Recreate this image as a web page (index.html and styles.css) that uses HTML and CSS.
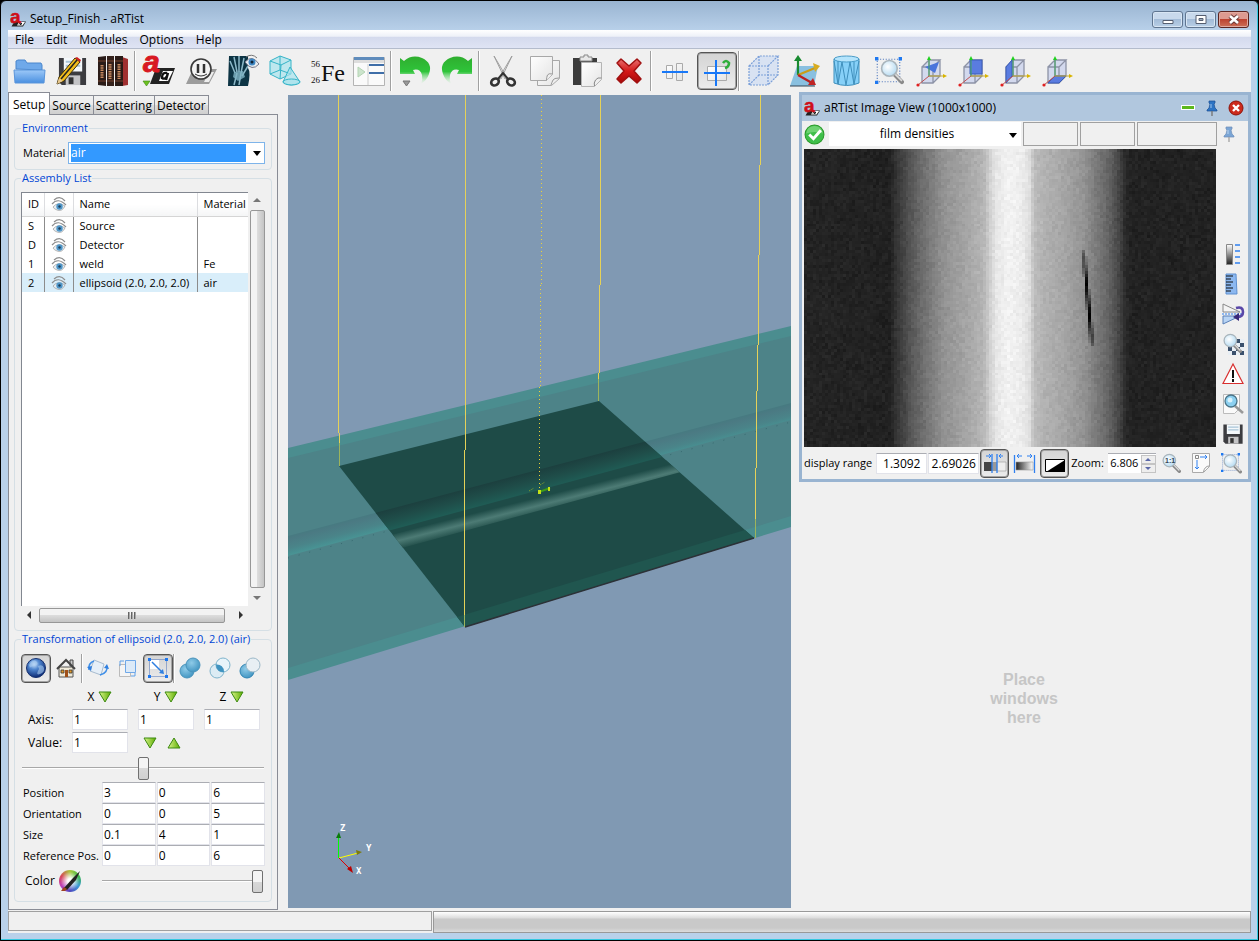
FILE: index.html
```
<!DOCTYPE html>
<html lang="en">
<head>
    <meta charset="UTF-8">
    <meta name="viewport" content="width=device-width, initial-scale=1.0">
    <title>Setup_Finish - aRTist</title>
    <link rel="stylesheet" href="styles.css">
</head>
<body>
<!-- shared icons -->
<svg class="defs" width="0" height="0" aria-hidden="true">
    <defs>
        <linearGradient id="gGreen" x1="0" y1="0" x2="1" y2="1"><stop offset="0" stop-color="#3fd03f"/><stop offset="1" stop-color="#108a10"/></linearGradient>
        <linearGradient id="gUndo" x1="0" y1="0" x2="0" y2="1"><stop offset="0" stop-color="#2fae2f"/><stop offset=".55" stop-color="#2fc43a"/><stop offset="1" stop-color="#a8eab0" stop-opacity="0"/></linearGradient>
        <linearGradient id="gTri" x1="0" y1="0" x2="1" y2="0"><stop offset="0" stop-color="#d9f58c"/><stop offset="1" stop-color="#5cab00"/></linearGradient>
        <linearGradient id="gFolder" x1="0" y1="0" x2="0" y2="1"><stop offset="0" stop-color="#9cc8f8"/><stop offset="1" stop-color="#4a90e0"/></linearGradient>
        <linearGradient id="gPaper" x1="0" y1="0" x2="1" y2="1"><stop offset="0" stop-color="#fff"/><stop offset="1" stop-color="#e4e4e4"/></linearGradient>
        <linearGradient id="gRed" x1="0" y1="0" x2="0" y2="1"><stop offset="0" stop-color="#e87070"/><stop offset=".5" stop-color="#d41a1a"/><stop offset="1" stop-color="#a80808"/></linearGradient>
        <linearGradient id="gGray" x1="0" y1="0" x2="1" y2="0"><stop offset="0" stop-color="#222"/><stop offset="1" stop-color="#fff"/></linearGradient>
        <linearGradient id="gGrayV" x1="0" y1="0" x2="0" y2="1"><stop offset="0" stop-color="#fff"/><stop offset="1" stop-color="#222"/></linearGradient>
        <radialGradient id="gLens" cx=".4" cy=".4" r=".6"><stop offset="0" stop-color="#fff"/><stop offset="1" stop-color="#b8dcf2"/></radialGradient>
        <radialGradient id="gGlobe" cx=".4" cy=".3" r=".7"><stop offset="0" stop-color="#cfe6fb"/><stop offset=".4" stop-color="#4f86cf"/><stop offset="1" stop-color="#0c2a74"/></radialGradient>
        <radialGradient id="gBall" cx=".4" cy=".35" r=".7"><stop offset="0" stop-color="#8fcbe8"/><stop offset="1" stop-color="#3f93c0"/></radialGradient>

        <symbol id="logo" viewBox="0 0 32 32">
            <path d="M3 31l6-10h23l-6 10z" fill="#222"/>
            <path d="M14 29l4-7h12l-5 7z" fill="#fff"/>
            <path d="M18 27q1-4 5-3l-2 4M23 24l-2 4" fill="none" stroke="#111" stroke-width="2"/>
            <text x="0" y="23" font-family="Liberation Sans" font-weight="bold" font-size="38" fill="#cf0f18" stroke="#cf0f18" stroke-width="1">a</text>
        </symbol>
        <symbol id="eye" viewBox="0 0 16 16">
            <path d="M3 4q6-5 11 1M1 8q6-7 14 1" fill="none" stroke="#8d8d8d" stroke-width="1.200"/>
            <path d="M2 11q5-6 12-1q-3 6-8 4q-3-1-4-3z" fill="#e8eef2" stroke="#999" stroke-width=".7"/>
            <circle cx="8.500" cy="10.500" r="3.200" fill="#4f96c8"/>
            <circle cx="8.500" cy="10.500" r="1.200" fill="#1c3c58"/>
        </symbol>
        <symbol id="down" viewBox="0 0 14 12">
            <path d="M1 1h12L7 11z" fill="url(#gTri)" stroke="#3c8a10"/>
        </symbol>
        <symbol id="up" viewBox="0 0 14 12">
            <path d="M1 11h12L7 1z" fill="url(#gTri)" stroke="#3c8a10"/>
        </symbol>
        <symbol id="cube" viewBox="0 0 32 32">
            <path d="M7 12l7-7h11v16l-7 7H7z" fill="#d3d9ee"/>
            <path d="M7 12h11v16H7zM7 12l7-7h11l-7 7M25 5v16l-7 7M14 5v16h11" fill="none" stroke="#8d93a6" stroke-width="1.3"/>
        </symbol>
        <symbol id="axes" viewBox="0 0 32 32">
            <path d="M14 21V4" stroke="#3fa45c"/><path d="M12 5l2-4 2 4z" fill="#1fd01f"/>
            <path d="M14 21h14" stroke="#c4a830"/><path d="M28 19l4 2-4 2z" fill="#d8b400"/>
            <path d="M14 21l-11 9" stroke="#c05050"/><circle cx="3" cy="30" r="1.600" fill="#e02020"/>
        </symbol>
        <symbol id="lens" viewBox="0 0 24 24">
            <path d="M14 14l8 8" stroke="#8a8a8a" stroke-width="4" stroke-linecap="round"/>
            <path d="M15 14l7 7" stroke="#ddd" stroke-width="1.500"/>
            <circle cx="10" cy="9" r="7.500" fill="url(#gLens)" stroke="#a9b4bb" stroke-width="1.500"/>
        </symbol>
        <symbol id="marks" viewBox="0 0 24 24">
            <path d="M2 2h20v20H2z" fill="none" stroke="#5a7fc0" stroke-dasharray="1 1.500"/>
            <path d="M0 0h3v3H0zM21 0h3v3h-3zM0 21h3v3H0z" fill="#1e78f0"/>
        </symbol>
        <symbol id="disk" viewBox="0 0 32 32">
            <path d="M2 2h28v28H5l-3-3z" fill="#3c3c40"/>
            <path d="M7 2h19v14H7z" fill="#f4f8fb"/>
            <path d="M9 6h15M9 10h15" stroke="#a8c4d8" stroke-width="2"/>
            <path d="M9 20h15v10H9z" fill="#c4c4c6"/><path d="M12 22h5v7h-5z" fill="#333"/>
        </symbol>
        <symbol id="pin" viewBox="0 0 16 16">
            <path d="M5 1h6v2l-1 1 1 4 2 2v1H3v-1l2-2 1-4-1-1z" fill="#2d74c4" stroke="#1a4f94" stroke-width=".7"/>
            <path d="M8 11v5" stroke="#777" stroke-width="1.400"/><path d="M7 4v4" stroke="#9cc4ee"/>
        </symbol>
    </defs>
</svg>

<div class="window">
    <header class="titlebar">
        <svg class="app-icon"><use href="#logo"/></svg>
        <h1>Setup_Finish - aRTist</h1>
        <div class="win-buttons">
            <button class="win-btn" aria-label="Minimize"><svg viewBox="0 0 28 15"><path d="M9.500 8.500h10v3h-10z" fill="#fff" stroke="#555e70"/></svg></button>
            <button class="win-btn" aria-label="Maximize"><svg viewBox="0 0 28 15"><path d="M9.500 3.500h10v8h-10z" fill="#fff" stroke="#555e70"/><path d="M12.500 6.500h4v2h-4z" fill="#9ab" stroke="#555e70"/></svg></button>
            <button class="win-btn close" aria-label="Close"><svg viewBox="0 0 28 15"><path d="M10.500 4l8 7M18.500 4l-8 7" stroke="#6b3a38" stroke-width="4.500"/><path d="M10.500 4l8 7M18.500 4l-8 7" stroke="#fff" stroke-width="2.600"/></svg></button>
        </div>
    </header>

    <nav class="menubar">
        <button>File</button><button>Edit</button><button>Modules</button><button>Options</button><button>Help</button>
    </nav>

    <div class="toolbar">
        <button aria-label="Open"><svg viewBox="0 0 32 32"><path d="M3 14V6l2-1h7l2 3h14l1 2v5z" fill="#6fa9ea" stroke="#4a86cc"/><path d="M1 15h31l-1 13H2z" fill="url(#gFolder)" stroke="#5b95da"/></svg></button>
        <button aria-label="Save"><svg viewBox="0 0 32 32"><use href="#disk" x="2" y="1" width="31" height="31"/><path d="M2 29l2-7L20 3l5 4L9 26z" fill="#f2bd1c" stroke="#3a2c08"/><path d="M6 24L22 5" stroke="#222" stroke-width="1.500"/><path d="M20 3l2-1 4 3-1 2z" fill="#d02020"/><path d="M2 29l2-6 4 3z" fill="#e8c890"/></svg></button>
        <button aria-label="Library"><svg viewBox="0 0 32 32"><path d="M25 2l6 2v26l-6 1z" fill="#a03030"/><path d="M1 2l8-1v30l-8-1z" fill="#2b1c18"/><path d="M10 1h7v30h-7z" fill="#35221c"/><path d="M18 1h8v30h-8z" fill="#291a16"/><path d="M1 6h8M1 26h8M10 6h7M10 26h7M18 6h8M18 26h8" stroke="#74402c"/><path d="M5 10v13M13 9v15M22 9v15" stroke="#c88a60" stroke-width="3" stroke-dasharray="1.500 .8"/></svg></button>
        <span class="sep"></span>
        <button aria-label="Run"><svg viewBox="0 0 32 32"><path d="M7 29l6-16h19l-6 16z" fill="#222"/><path d="M16 26l4-10h10l-5 10z" fill="#fff"/><path d="M24 18q-5-1-5 5 3 2 5-2l1-3-2 7" fill="none" stroke="#111" stroke-width="2.400"/><text x="0" y="17" font-family="Liberation Sans" font-style="italic" font-weight="bold" font-size="30" fill="#d81822" stroke="#d81822">a</text><path d="M0 26h7l-3.500 5z" fill="#6cc020" stroke="#3c8a10" stroke-width=".6"/></svg></button>
        <button aria-label="Pause"><svg viewBox="0 0 32 32"><path d="M1 29l7-15h24l-8 15z" fill="#9c9c9c"/><path d="M19 27l5-10h5l-5 10z" fill="#eee"/><circle cx="16" cy="14" r="10" fill="#f4f4f4" stroke="#3a3a3a" stroke-width="1.600"/><path d="M13 9v9M19 9v9" stroke="#333" stroke-width="2.500"/><path d="M10 19q6 4 12 0" fill="none" stroke="#333"/></svg></button>
        <button aria-label="Radiograph"><svg viewBox="0 0 32 32"><path d="M2 1h19v12q3 4 0 18H1z" fill="#0d3444"/><path d="M3 6l5 12M7 2l3 15M12 1v16M17 3l-3 15M21 11l-6 10M10 18l-3 12M14 18l-2 12" stroke="#8cb8c8" stroke-width="1.500"/><path d="M7 17l9-1 2 6-7 4-5-4z" fill="#7fb4c4" opacity=".8"/><path d="M18 7q7-8 14 2q-7 8-14-2z" fill="#e8eef2" stroke="#778"/><circle cx="25" cy="7" r="3.500" fill="#3f88c4"/><circle cx="25" cy="7" r="1.500" fill="#123"/><path d="M19 2q6-4 11 1" fill="none" stroke="#777"/></svg></button>
        <button aria-label="Geometry"><svg viewBox="0 0 32 32"><g fill="#a8e2ec" fill-opacity=".7" stroke="#35b4c8"><path d="M1 6l10-5 11 4v14l-11 5L1 19z"/><path d="M1 6l11 4 10-5M12 10l-1 14M11 1v14L1 19M11 15l11 4" fill="none"/><path d="M21 12L14 27q8 6 17 0z"/><ellipse cx="22.500" cy="27" rx="8.500" ry="3"/></g></svg></button>
        <button aria-label="Materials"><svg viewBox="0 0 32 32"><g font-family="Liberation Serif" fill="#111"><text x="0" y="12" font-size="9">56</text><text x="0" y="28" font-size="9">26</text><text x="10" y="26" font-size="24">Fe</text></g></svg></button>
        <button aria-label="Modules"><svg viewBox="0 0 32 32"><path d="M.5 2.500h31v28H.5z" fill="#fafafa" stroke="#b4b4b4"/><path d="M1 2h30v3H1z" fill="#5f8cbc"/><path d="M1 5h30v3H1z" fill="#ddd"/><path d="M15 9v21" stroke="#ccc"/><path d="M16 9h15v2H16zM16 17h15v2H16z" fill="#3f6ea8"/><path d="M5 12l7 5-7 5z" fill="#cce4cc" stroke="#b4d4b4"/></svg></button>
        <span class="sep"></span>
        <button aria-label="Undo"><svg viewBox="0 0 32 32"><path d="M1 3l4 3q8-7 18-3 11 5 7 16-2 6-8 10 2-4 1-9-2-7-9-5l2 4H1z" fill="url(#gUndo)"/><path d="M4 26h7l-3.500 5z" fill="#999" stroke="#777"/></svg></button>
        <button aria-label="Redo"><svg viewBox="0 0 32 32"><path d="M31 3l-4 3q-8-7-18-3-11 5-7 16 2 6 8 10-2-4-1-9 2-7 9-5l-2 4h15z" fill="url(#gUndo)"/></svg></button>
        <span class="sep"></span>
        <button aria-label="Cut"><svg viewBox="0 0 32 32"><path d="M7 1l13 22-2 1zM25 1L12 23l2 1z" fill="#eee" stroke="#999" stroke-width=".9"/><g fill="none" stroke="#333" stroke-width="2.600"><ellipse cx="8" cy="27" rx="4" ry="3.200" transform="rotate(-30 8 27)"/><ellipse cx="24" cy="27" rx="4" ry="3.200" transform="rotate(30 24 27)"/></g><path d="M11 24l5-6 5 6" fill="none" stroke="#333" stroke-width="2"/></svg></button>
        <button aria-label="Copy"><svg viewBox="0 0 32 32"><path d="M8.500 5.500h22v18l-8 7h-14z" fill="url(#gPaper)" stroke="#a8a8a8"/><path d="M1.500 1.500h22v18l-6 6h-16z" fill="url(#gPaper)" stroke="#a8a8a8"/><path d="M23.500 19q-4-1-5 1t-1 5.500M30 23q-5 0-6 2t-2 5" fill="#eee" stroke="#999"/></svg></button>
        <button aria-label="Paste"><svg viewBox="0 0 32 32"><path d="M2 3h24v27H2z" fill="#3c3c3c"/><path d="M9 2h4V0h4v2h4v4H9z" fill="#e8e8e8" stroke="#888"/><path d="M10.500 7.500h20v17l-7 7h-13z" fill="url(#gPaper)" stroke="#b4b4b4"/><path d="M30.500 23q-4-1-6 2t-1 6" fill="#eee" stroke="#888"/></svg></button>
        <button aria-label="Delete"><svg viewBox="0 0 32 32"><path d="M8 4l8 7 8-7 4 4-7 8 7 8-4 4-8-7-8 7-4-4 7-8-7-8z" fill="url(#gRed)" stroke="#a01010" stroke-linejoin="round" stroke-width="1.500"/></svg></button>
        <span class="sep"></span>
        <button aria-label="Align"><svg viewBox="0 0 32 32"><path d="M7.500 10.500h6v13h-6zM17.500 8.500h6v17h-6z" fill="url(#gPaper)" stroke="#aaa"/><path d="M3 17h26" stroke="#1878f8" stroke-width="2"/></svg></button>
        <button class="pressed" aria-label="Snap" aria-pressed="true"><svg viewBox="0 0 32 32"><path d="M6.500 11.500h19v14h-19z" fill="url(#gPaper)" stroke="#aaa"/><path d="M3 18h26M15 5v26" stroke="#1878f8" stroke-width="2"/><path d="M22 8q3-4 6 0 0 4-4 5" fill="none" stroke="#2fae3a" stroke-width="2.600"/></svg></button>
        <span class="sep"></span>
        <button aria-label="Wireframe"><svg viewBox="0 0 32 32"><path d="M2 11L12 1h19v19L21 30H2z" fill="#d8e2f2"/><path d="M2 11h19v19H2zM2 11L12 1h19L21 11M31 1v19L21 30M12 1v19h19M12 20L2 30" fill="none" stroke="#7a9fd8" stroke-width="1.200" stroke-dasharray="2 1"/></svg></button>
        <button aria-label="Axes"><svg viewBox="0 0 32 32"><path d="M8 11h21l-4 20H1z" fill="#6fb4dc" opacity=".8"/><path d="M1 31h25" stroke="#345" /><path d="M9 20V4" stroke="#188a30" stroke-width="2.200"/><path d="M5 6l4-6 4 6z" fill="#188a30"/><path d="M9 20l17-7" stroke="#c89c18" stroke-width="2.200"/><path d="M24 8l7 3-5 6z" fill="#d8ac20"/><path d="M9 20l14 8" stroke="#b82020" stroke-width="2.200"/><path d="M24 23l3 7-8 0z" fill="#c02424"/></svg></button>
        <button aria-label="Mesh"><svg viewBox="0 0 32 32"><path d="M3 4v24q13 5 25 0V4z" fill="#86d0f8"/><ellipse cx="15.500" cy="4" rx="12.500" ry="3" fill="#b4e4fc" stroke="#4a9cc8"/><path d="M3 4v24q13 5 25 0V4M3 6l4 23L11 7l4 23 4-23 4 22 5-23M7 6v23M23 7v22" fill="none" stroke="#3f8fbc"/></svg></button>
        <button aria-label="Zoom to fit"><svg viewBox="0 0 32 32"><use href="#marks" x="2" y="2" width="27" height="27"/><use href="#lens" x="6" y="1" width="25" height="31"/></svg></button>
        <button aria-label="Free view"><svg viewBox="0 0 32 32"><use href="#cube"/><path d="M10 12l14-5-4 11z" fill="#4a74dc"/><use href="#axes"/></svg></button>
        <button aria-label="Front view"><svg viewBox="0 0 32 32"><use href="#cube"/><path d="M13 5h12v14H13z" fill="#5a7ce0" stroke="#3a5cb8"/><use href="#axes"/></svg></button>
        <button aria-label="Side view"><svg viewBox="0 0 32 32"><use href="#cube"/><path d="M7 12l6-7v16l-6 7z" fill="#5a7ce0" stroke="#3a5cb8"/><use href="#axes"/></svg></button>
        <button aria-label="Top view"><svg viewBox="0 0 32 32"><use href="#cube"/><path d="M7 28l7-7h11l-7 7z" fill="#5a7ce0" stroke="#3a5cb8"/><use href="#axes"/></svg></button>
    </div>

    <main class="main">
        <section class="sidebar">
            <div class="tabs" role="tablist">
                <button class="tab active" role="tab" aria-selected="true">Setup</button>
                <button class="tab" role="tab">Source</button>
                <button class="tab" role="tab">Scattering</button>
                <button class="tab" role="tab">Detector</button>
            </div>
            <div class="pane">
                <fieldset class="group">
                    <legend>Environment</legend>
                    <div class="material">
                        <label for="material">Material</label>
                        <div class="combo"><select id="material"><option>air</option></select></div>
                    </div>
                </fieldset>

                <fieldset class="group assembly">
                    <legend>Assembly List</legend>
                    <div class="list">
                        <div class="list-body">
                            <table>
                                <thead>
                                    <tr><th class="c-id">ID</th><th class="c-eye"><svg><use href="#eye"/></svg></th><th class="c-name">Name</th><th class="c-mat">Material</th></tr>
                                </thead>
                                <tbody>
                                    <tr><td>S</td><td><svg><use href="#eye"/></svg></td><td>Source</td><td></td></tr>
                                    <tr><td>D</td><td><svg><use href="#eye"/></svg></td><td>Detector</td><td></td></tr>
                                    <tr><td>1</td><td><svg><use href="#eye"/></svg></td><td>weld</td><td>Fe</td></tr>
                                    <tr class="selected"><td>2</td><td><svg><use href="#eye"/></svg></td><td>ellipsoid (2.0, 2.0, 2.0)</td><td>air</td></tr>
                                </tbody>
                            </table>
                        </div>
                        <div class="vscroll"><i class="arrow a-up"></i><div class="thumb"></div><i class="arrow a-down"></i></div>
                        <div class="hscroll"><i class="arrow a-left"></i><div class="thumb"><span></span></div><i class="arrow a-right"></i></div>
                    </div>
                </fieldset>

                <fieldset class="group transform">
                    <legend>Transformation of ellipsoid (2.0, 2.0, 2.0) (air)</legend>
                    <div class="tools">
                        <button class="pressed" aria-label="World"><svg viewBox="0 0 22 22"><circle cx="11" cy="11" r="9.500" fill="url(#gGlobe)" stroke="#16306e"/><path d="M6 5q4-3 6 0t-3 4-4 3-1-4zM13 9q5-2 6 2t-4 6-1-5z" fill="#a8ccf0" opacity=".6"/></svg></button>
                        <button aria-label="Home"><svg viewBox="0 0 22 22"><path d="M15 3h3v6h-3z" fill="#ccc" stroke="#444"/><path d="M4 10h14v10H4z" fill="#f0ead8" stroke="#555"/><path d="M2 12l9-9 9 9" fill="none" stroke="#444" stroke-width="2"/><path d="M6 13h3v3H6zM14 13h3v3h-3z" fill="#e89c28" stroke="#333" stroke-width=".8"/><path d="M10 13h3v7h-3z" fill="#a05018"/></svg></button>
                        <span class="sep"></span>
                        <button aria-label="Rotate"><svg viewBox="0 0 22 22"><path d="M7 3l10 4-3 11-11-4z" fill="#e6eff8" stroke="#a8bcd0"/><path d="M2 13q-1-7 5-9M20 9q1 7-7 9" fill="none" stroke="#3f8fe8" stroke-width="1.500"/><path d="M0 10l4 4 1-5zM22 12l-5-1 3-4z" fill="#2f7fe0"/></svg></button>
                        <button aria-label="Translate"><svg viewBox="0 0 22 22"><path d="M2.500 7.500h11v12h-11z" fill="#f4f4f4" stroke="#bbb"/><path d="M8.500 3.500h10v12h-10z" fill="#dceaf8" stroke="#6fa8e8"/><path d="M3 9V4h4M14 19h4v-3" fill="none" stroke="#5fa0e8"/></svg></button>
                        <button class="pressed" aria-label="Scale"><svg viewBox="0 0 22 22"><path d="M3 3h9v9H3z" fill="#fff"/><path d="M2.500 2.500h17v17h-17z" fill="none" stroke="#4a70b8" stroke-dasharray="1 1"/><path d="M1 1h3v3H1zM18 1h3v3h-3zM1 18h3v3H1zM18 18h3v3h-3z" fill="#1e78f0"/><path d="M5 5l10 10" stroke="#2f7fe0" stroke-width="1.500"/><path d="M17 17l-5-1 4-4z" fill="#2f7fe0"/></svg></button>
                        <span class="sep"></span>
                        <button aria-label="Union"><svg viewBox="0 0 22 22"><circle cx="8" cy="14" r="7" fill="url(#gBall)" stroke="#4a94bc"/><circle cx="14" cy="8" r="7" fill="url(#gBall)" stroke="#4a94bc"/></svg></button>
                        <button aria-label="Intersection"><svg viewBox="0 0 22 22"><circle cx="8" cy="14" r="7" fill="#dcecf4" stroke="#7fb4cc"/><circle cx="14" cy="8" r="7" fill="#e8f4fa" stroke="#7fb4cc"/><path d="M7 7.500A7 7 0 0 1 15 15A7 7 0 0 1 7 7.500z" fill="#3f93c0"/></svg></button>
                        <button aria-label="Difference"><svg viewBox="0 0 22 22"><circle cx="8" cy="14" r="7" fill="url(#gBall)" stroke="#2f84b4"/><circle cx="14" cy="8" r="7" fill="#e8eff4" stroke="#9cb8c8"/></svg></button>
                    </div>

                    <div class="axis-grid">
                        <span></span>
                        <button class="axis">X <svg><use href="#down"/></svg></button>
                        <button class="axis">Y <svg><use href="#down"/></svg></button>
                        <button class="axis">Z <svg><use href="#down"/></svg></button>
                        <label for="axis-x">Axis:</label>
                        <input type="text" id="axis-x" value="1">
                        <input type="text" aria-label="Axis Y" value="1">
                        <input type="text" aria-label="Axis Z" value="1">
                        <label for="value">Value:</label>
                        <input type="text" id="value" value="1">
                        <div class="steps">
                            <button aria-label="Decrease"><svg><use href="#down"/></svg></button>
                            <button aria-label="Increase"><svg><use href="#up"/></svg></button>
                        </div>
                    </div>

                    <div class="value-slider">
                        <input type="range" class="slider" aria-label="Value slider" value="50">
                    </div>

                    <div class="pos-grid">
                        <label for="pos">Position</label>
                        <input type="text" id="pos" value="3"><input type="text" aria-label="Position Y" value="0"><input type="text" aria-label="Position Z" value="6">
                        <label for="ori">Orientation</label>
                        <input type="text" id="ori" value="0"><input type="text" aria-label="Orientation Y" value="0"><input type="text" aria-label="Orientation Z" value="5">
                        <label for="size">Size</label>
                        <input type="text" id="size" value="0.1"><input type="text" aria-label="Size Y" value="4"><input type="text" aria-label="Size Z" value="1">
                        <label for="ref">Reference Pos.</label>
                        <input type="text" id="ref" value="0"><input type="text" aria-label="Reference Y" value="0"><input type="text" aria-label="Reference Z" value="6">
                    </div>

                    <div class="color-row">
                        <label for="opacity">Color</label>
                        <button class="wheel" aria-label="Pick color"><svg viewBox="0 0 22 22"><path d="M5 18L14 8l7-7-4 9-9 10z" fill="#222"/><path d="M2 21l3-4 3 2-2 2z" fill="#a04020"/></svg></button>
                        <input type="range" class="slider" id="opacity" value="100">
                    </div>
                </fieldset>
            </div>
        </section>

        <section class="view3d">
            <svg viewBox="0 0 503 813" preserveAspectRatio="xMidYMid slice">
                <defs>
                    <linearGradient id="weld" gradientUnits="userSpaceOnUse" x1="0" y1="441" x2="5" y2="460">
                        <stop offset="0" stop-color="#477a81"/><stop offset=".15" stop-color="#4b7a83"/><stop offset=".6" stop-color="#4a8489"/><stop offset=".85" stop-color="#488f91"/><stop offset="1" stop-color="#4a9595"/>
                    </linearGradient>
                    <linearGradient id="weldDark" gradientUnits="userSpaceOnUse" x1="0" y1="441" x2="5" y2="460">
                        <stop offset="0" stop-color="#1c403f"/><stop offset=".5" stop-color="#1f4d49"/><stop offset="1" stop-color="#1f5c55"/>
                    </linearGradient>
                    <linearGradient id="shine" gradientUnits="userSpaceOnUse" x1="111" y1="437" x2="115" y2="453">
                        <stop offset="0" stop-color="#1e4b47"/><stop offset=".5" stop-color="#4d7b75"/><stop offset="1" stop-color="#23504b"/>
                    </linearGradient>
                    <clipPath id="plate"><path d="M51 371L311 306 466 443 177 532z"/></clipPath>
                </defs>
                <!-- weld plate -->
                <path d="M0 353L503 231V432L0 585z" fill="#4b8d8f"/>
                <path d="M0 363L503 241V421L0 573z" fill="#4d8388"/>
                <path d="M0 441L503 308V325L0 461z" fill="url(#weld)"/>
                <path d="M0 463L503 327" stroke="#376a70" stroke-dasharray="1 10"/>
                <!-- detector -->
                <g clip-path="url(#plate)">
                    <path d="M0 300h503v240H0z" fill="#1e4b47"/>
                    <path d="M0 441L503 308V327L0 463z" fill="url(#weldDark)"/>
                    <path d="M0 468L503 331V347L0 484z" fill="url(#shine)"/>
                    <path d="M0 573L503 421V440L0 590z" fill="#20564f"/>
                </g>
                <path d="M177 532L466 443" stroke="#2c3137" stroke-width="1.500"/>
                <!-- beam -->
                <g fill="none" stroke="#e5d158" shape-rendering="crispEdges">
                    <path d="M50 0V338M51 338V348M177 0V355M176 355V520M312 0V190M311 190V278M310 278V284M472 0V70M471 70V160M469 250V296M468 296V373M470 160V250M467 373V424"/>
                    <path d="M51 348V371M310 284V306M176 520V532M467 424V443" stroke="#9db45c"/>
                    <path d="M253 0V190M252 190V292M251 292V394" stroke="#ecd338" stroke-dasharray="1 3"/>
                </g>
                <path d="M251 397l11-4" stroke="#3f9a18" stroke-width="2"/>
                <path d="M250 395h3v4h-3zM260 392h2v4h-2z" fill="#c4e018"/>
                <path d="M241 396l5-3M252 390l5-3" stroke="#8aa828" stroke-dasharray="1 1"/>
                <!-- orientation marker -->
                <path d="M50 763V742" stroke="#0f0" shape-rendering="crispEdges"/><path d="M48 743l3-6 2 6z" fill="#0a7a0a"/>
                <path d="M51 763l19-5" stroke="#ff0"/><path d="M68 755l6 2-5 3z" fill="#7a7a10"/>
                <path d="M51 763l10 10" stroke="#d00"/><path d="M59 774l4-3 2 7z" fill="#b00"/>
                <g font-family="DejaVu Sans Mono" font-weight="bold" font-size="9" fill="#fff"><text x="52" y="736">Z</text><text x="78" y="756">Y</text><text x="68" y="779">X</text></g>
            </svg>
        </section>

        <section class="workspace">
            <div class="subwindow">
                <header>
                    <svg class="app-icon"><use href="#logo"/></svg>
                    <h2>aRTist Image View (1000x1000)</h2>
                    <button aria-label="Collapse"><svg viewBox="0 0 16 16"><path d="M1 5h14v5H1z" fill="#fff"/><path d="M2 6h12v3H2z" fill="#5cb81c"/></svg></button>
                    <button aria-label="Pin"><svg viewBox="0 0 16 16"><use href="#pin"/></svg></button>
                    <button aria-label="Close view"><svg viewBox="0 0 16 16"><circle cx="8" cy="8" r="7" fill="#cc2a1c" stroke="#8e1208"/><path d="M5 5l6 6M11 5l-6 6" stroke="#fff" stroke-width="2.400"/></svg></button>
                </header>
                <div class="mode-row">
                    <svg class="ok" viewBox="0 0 20 20"><circle cx="10" cy="10" r="9" fill="#3fbf4a" stroke="#2a9a2a"/><path d="M2 9q1-7 8-7t8 7q-8-3-16 0z" fill="#8ee08e" opacity=".6"/><path d="M5 10l4 4 7-8" fill="none" stroke="#fff" stroke-width="2.800"/></svg>
                    <div class="combo mode"><select aria-label="Display mode"><option>film densities</option></select></div>
                    <output></output><output></output><output class="wide"></output>
                    <button class="faint" aria-label="Pin values"><svg viewBox="0 0 16 16"><use href="#pin"/></svg></button>
                </div>
                <div class="image-row">
                    <canvas id="xray" width="138" height="100"></canvas>
                    <div class="side-tools">
                        <button aria-label="Histogram"><svg viewBox="0 0 22 22"><path d="M4.500 1.500h6v20h-6z" fill="url(#gGrayV)" stroke="#888"/><path d="M13 2h5M13 8h5M13 14h5M13 20h5" stroke="#2f80f0" stroke-width="1.300"/></svg></button>
                        <button aria-label="Ruler"><svg viewBox="0 0 22 22"><path d="M4 1h10l1 20H4z" fill="#8cb8f0" stroke="#5f90d0"/><path d="M4 3h7M4 6h5M4 9h7M4 12h5M4 15h7M4 18h5" stroke="#111" stroke-width="1.200"/></svg></button>
                        <button aria-label="Flip"><svg viewBox="0 0 22 22"><path d="M1 1v8h17z" fill="#f4f4f4" stroke="#888"/><path d="M1 21v-8h17z" fill="#b8d4f4" stroke="#5a80b8"/><path d="M0 11h20" stroke="#2f80f0" stroke-dasharray="2 1"/><path d="M14 5q7-2 7 4 0 5-6 5" fill="none" stroke="#5a48a8" stroke-width="2.600"/><path d="M11 14l6-4v8z" fill="#382878"/></svg></button>
                        <button aria-label="Noise"><svg viewBox="0 0 22 22"><path d="M6 6h16v16H6z" fill="#e8eef4"/><path d="M14 6h4v4h-4zM18 10h4v4h-4zM14 14h4v4h-4zM10 18h4v4h-4zM18 18h4v4h-4zM6 14h4v4H6z" fill="#3a506c"/><use href="#lens" x="0" y="0" width="20" height="20"/></svg></button>
                        <button aria-label="Warnings"><svg viewBox="0 0 22 22"><path d="M11 1l10 19.500H1z" fill="#fff" stroke="#d83030" stroke-width="1.200"/><path d="M11 7v8M11 16v3" stroke="#111" stroke-width="2"/></svg></button>
                        <button aria-label="Inspect"><svg viewBox="0 0 22 22"><path d="M1.500 1.500h16v14l-5 5h-11z" fill="#fafafa" stroke="#bbb"/><path d="M13 13l8 7" stroke="#999" stroke-width="2.600"/><circle cx="9" cy="8" r="6" fill="#8cd0f0" stroke="#4a7488" stroke-width="1.300"/><circle cx="8" cy="7" r="2.500" fill="#d8f2fc"/></svg></button>
                        <button aria-label="Save image"><svg viewBox="0 0 22 22"><use href="#disk"/></svg></button>
                    </div>
                </div>
                <div class="range-row">
                    <label for="lo">display range</label>
                    <input type="text" id="lo" value="1.3092">
                    <input type="text" id="hi" aria-label="Upper limit" value="2.69026">
                    <button class="pressed" aria-label="Window in" aria-pressed="true"><svg viewBox="0 0 22 22"><path d="M0 10h8v9H0z" fill="#444"/><path d="M8 10h5v9H8z" fill="#999"/><path d="M13 10h9v9h-9z" fill="#eee" stroke="#999" stroke-width=".6"/><path d="M8 2v19M13 2v19" stroke="#2f80f0" stroke-width="1.300"/><path d="M2 4h5M19 4h-4M5 2l2 2-2 2M17 2l-2 2 2 2" fill="none" stroke="#2f80f0"/></svg></button>
                    <button aria-label="Window out"><svg viewBox="0 0 22 22"><path d="M2 10h17v8H2z" fill="url(#gGray)" stroke="#999" stroke-width=".6"/><path d="M.5 3v18M20.500 3v18" stroke="#2f80f0" stroke-width="1.300"/><path d="M3 4h5M18 4h-5M5 2L3 4l2 2M16 2l2 2-2 2" fill="none" stroke="#2f80f0"/></svg></button>
                    <button class="pressed" aria-label="Invert" aria-pressed="true"><svg viewBox="0 0 22 22"><path d="M1.500 7.500h19v12h-19z" fill="#fff" stroke="#000"/><path d="M21 8v12H2z"/></svg></button>
                    <label for="zoom">Zoom:</label>
                    <div class="spin"><input type="text" id="zoom" value="6.806"><button class="s-up" aria-label="Zoom in"></button><button class="s-down" aria-label="Zoom out"></button></div>
                    <button aria-label="Actual size"><svg viewBox="0 0 22 22"><use href="#lens" x="1" y="1" width="20" height="20"/><text x="5" y="11" font-family="Liberation Sans" font-weight="bold" font-size="7" fill="#345">1:1</text></svg></button>
                    <button aria-label="Fit page"><svg viewBox="0 0 22 22"><path d="M2.500 1.500h17v13l-6 6h-11z" fill="#fafafa" stroke="#aaa"/><path d="M19.500 14q-5 0-6 6" fill="none" stroke="#999"/><path d="M5.500 3.500h3v3h-3z" fill="none" stroke="#888"/><path d="M10 5h7M7 8v9M15 3l2 2-2 2M5 15l2 2 2-2" fill="none" stroke="#2f80f0"/></svg></button>
                    <button aria-label="Fit selection"><svg viewBox="0 0 22 22"><use href="#marks" x="1" y="1" width="19" height="19"/><use href="#lens" x="2" y="1" width="20" height="21"/></svg></button>
                </div>
            </div>
            <p class="placeholder">Place<br>windows<br>here</p>
        </section>
    </main>

    <footer class="statusbar">
        <div class="status-text"></div>
        <div class="status-progress"></div>
    </footer>
</div>

<script>
    const canvas = document.getElementById('xray');
    const ctx = canvas.getContext('2d');
    const img = ctx.createImageData(canvas.width, canvas.height);

    // brightness profile across the weld: [x, gray]
    const profile = [[0, 36], [86, 33], [91, 50], [102, 75], [118, 108], [140, 146], [160, 162], [180, 182], [187, 212], [193, 232],
        [205, 242], [218, 236], [226, 220], [230, 188], [240, 178], [260, 165], [280, 146], [291, 124], [300, 108], [308, 90], [316, 68], [322, 42], [328, 34], [412, 34]];

    function gray(x) {
        let i = 1;
        while (i < profile.length - 1 && profile[i][0] < x) i++;
        const a = profile[i - 1], b = profile[i];
        return a[1] + (b[1] - a[1]) * (x - a[0]) / (b[0] - a[0]);
    }

    let seed = 7;
    function random() {
        seed = (seed * 16807) % 2147483647;
        return seed / 2147483647;
    }

    for (let j = 0; j < canvas.height; j++) {
        for (let i = 0; i < canvas.width; i++) {
            const x = (i + 0.5) * 412 / canvas.width;
            const y = (j + 0.5) * 298 / canvas.height;
            let v = gray(x) + (random() + random() - 1) * 9;
            // the ellipsoid flaw
            const t = (y - 101) / 97;
            if (t > 0 && t < 1) {
                const d = Math.abs(x - (279 + t * 9));
                const depth = Math.sqrt(1 - (2 * t - 1) * (2 * t - 1));
                if (d < 2.5) v -= 160 * depth * (1 - d / 2.8);
            }
            const k = (j * canvas.width + i) * 4;
            img.data[k] = img.data[k + 1] = img.data[k + 2] = v;
            img.data[k + 3] = 255;
        }
    }
    ctx.putImageData(img, 0, 0);
</script>
</body>
</html>
```
FILE: styles.css
```
* {
    margin: 0;
    padding: 0;
    box-sizing: border-box;
}

body {
    font-family: 'Open Sans', 'Noto Sans', sans-serif;
    font-size: 12px;
    line-height: 16px;
    color: #000;
    background: #000;
}

button, input, select {
    font: inherit;
    color: inherit;
}

button {
    border: none;
    background: none;
}

svg {
    display: block;
    overflow: visible;
}

.defs {
    position: absolute;
}

.window {
    min-height: 100vh;
    display: flex;
    flex-direction: column;
    padding: 1px 7px 7px;
    background: #b9d1ea;
    border: 1px solid #000;
    border-radius: 6px 6px 0 0;
    box-shadow: inset -1px -1px 0 #35c8e0;
    background-image: linear-gradient(#99b4d1, #b9d1ea 30px);
}

/* title bar */
.titlebar {
    display: flex;
    align-items: center;
    height: 28px;
    padding: 6px 2px 0;
    gap: 4px;
}

.titlebar h1, .subwindow h2 {
    flex: 1;
    font-size: 12px;
    font-weight: normal;
}

.app-icon {
    width: 16px;
    height: 16px;
}

.win-buttons {
    display: flex;
    gap: 2px;
}

.win-btn {
    width: 31px;
    height: 17px;
    border: 1px solid #5f7590;
    border-radius: 3px;
    background: linear-gradient(#c8d9ec 45%, #a3bcd8 50%, #b8cfe6);
    box-shadow: inset 0 0 0 1px #d8e6f4;
}

.win-btn svg {
    width: 29px;
    height: 15px;
}

.win-btn.close {
    background: linear-gradient(#dd9a90 45%, #bd4330 50%, #cc7058);
    border-color: #5c2420;
    box-shadow: inset 0 0 0 1px #e0aaa0;
}

/* menu and toolbar */
.menubar {
    display: flex;
    height: 19px;
    padding-left: 1px;
    background: linear-gradient(#fff, #eef1f8 35%, #d4daed 40%, #dfe4f4);
    border-bottom: 1px solid #b4bccc;
}

.menubar button {
    padding: 0 6px;
    line-height: 20px;
}

.toolbar {
    display: flex;
    align-items: center;
    height: 43px;
    background: #f0f0f0;
}

.toolbar button {
    width: 42px;
    height: 40px;
    flex: none;
    display: flex;
    align-items: center;
    justify-content: center;
}

.toolbar svg {
    width: 32px;
    height: 32px;
}

.sep {
    flex: none;
    width: 4px;
    height: 40px;
    border-left: 1px solid #a0a0a0;
    box-shadow: inset 1px 0 0 #fff;
}

.pressed {
    border: 1px solid #555;
    border-radius: 4px;
    background: linear-gradient(#d4d4d4, #ececec);
    box-shadow: inset 0 0 0 1px #a4a4a4;
}

.toolbar .pressed {
    width: 40px;
    height: 38px;
    margin: 0 1px;
}

/* main area */
.main {
    flex: 1;
    display: grid;
    grid-template-columns: 270px 1fr 452px;
    background: #f0f0f0;
    padding-bottom: 1px;
}

.sidebar {
    display: flex;
    flex-direction: column;
}

.tabs {
    display: flex;
    align-items: flex-end;
    height: 22px;
}

.tab {
    height: 19px;
    padding: 0 2px;
    line-height: 19px;
    border: 1px solid #898c95;
    border-left-width: 0;
    border-bottom: none;
    background: linear-gradient(#f2f2f2, #ebebeb 50%, #dddddd 50%, #cfcfcf);
}

.tab.active {
    position: relative;
    height: 23px;
    margin-bottom: -1px;
    padding: 0 4px;
    border-left-width: 1px;
    background: #fff;
}

.pane {
    flex: 1;
    display: flex;
    flex-direction: column;
    padding: 5px 5px 7px;
    border: 1px solid #898c95;
}

.group {
    min-width: 0;
    padding: 0 6px;
    border: 1px solid #d5dfe5;
    border-radius: 4px;
}

.group legend {
    padding: 0 1px;
    font-size: 11px;
    line-height: 16px;
    color: #0046d5;
}

.material {
    display: flex;
    align-items: center;
    justify-content: space-between;
    padding: 6px 0 5px 2px;
    font-size: 11px;
}

.combo {
    position: relative;
    width: 197px;
    height: 22px;
    font-size: 12px;
}

.combo select {
    appearance: none;
    width: 100%;
    height: 22px;
    padding-left: 2px;
    color: #fff;
    border: 1px solid #7eb4ea;
    background: linear-gradient(#39f, #39f) 2px 1px / calc(100% - 20px) 18px no-repeat #fff;
}

.combo::after {
    content: '';
    position: absolute;
    right: 4px;
    top: 9px;
    border: 4px solid transparent;
    border-top: 5px solid #000;
    border-bottom: none;
    pointer-events: none;
}

.assembly {
    flex: 1;
    padding-bottom: 7px;
}

.list {
    height: 100%;
    display: grid;
    grid-template-columns: 1fr 16px;
    grid-template-rows: 1fr 16px;
    gap: 1px;
    padding-top: 6px;
}

.list-body {
    background: #fff;
    border: 1px solid #828790;
    border-right: none;
    border-bottom: none;
    overflow: hidden;
}

table {
    width: 226px;
    table-layout: fixed;
    border-collapse: collapse;
    font-size: 11px;
    white-space: nowrap;
}

th {
    height: 23px;
    padding-left: 6px;
    font-weight: normal;
    text-align: left;
    background: linear-gradient(#fff 50%, #f4f5f6);
    border-right: 1px solid #dcdde0;
    border-bottom: 1px solid #d5d5d5;
}

td {
    height: 19px;
    padding-left: 6px;
    border-right: 1px solid #8c8c8c;
}

th:last-child, td:last-child {
    border-right: none;
}

td svg, th svg {
    width: 16px;
    height: 16px;
}

.c-id {
    width: 22px;
}

.c-eye {
    width: 29px;
}

.c-name {
    width: 124px;
}

.selected {
    background: #d9eefa;
}

.vscroll, .hscroll {
    display: flex;
    align-items: center;
    background: #f0f0f0;
}

.vscroll {
    flex-direction: column;
}

.arrow {
    flex: none;
    border: 4px solid transparent;
}

.a-up {
    margin: 2px 0 8px;
    border-bottom-color: #777;
}

.a-down {
    margin: 8px 0 2px;
    border-top-color: #777;
}

.a-left {
    margin: 0 8px 0 2px;
    border-right-color: #333;
}

.a-right {
    margin: 0 1px 0 14px;
    border-left-color: #333;
}

.thumb {
    flex: 1;
    border: 1px solid #979797;
    border-radius: 2px;
}

.vscroll .thumb {
    width: 15px;
    background: linear-gradient(90deg, #f3f3f3 45%, #dcdcdc 50%, #c4c4c4);
}

.hscroll .thumb {
    height: 15px;
    background: linear-gradient(#f3f3f3 45%, #dcdcdc 50%, #c4c4c4);
}

.hscroll span {
    display: block;
    width: 8px;
    height: 7px;
    margin: 3px auto;
    background: repeating-linear-gradient(90deg, #666 0 1px, #aaa 1px 2px, transparent 2px 3px);
}

/* transformation box */
.tools {
    display: flex;
    align-items: center;
    height: 30px;
    margin-top: 6px;
}

.tools button, .range-row > button {
    flex: none;
    width: 30px;
    height: 29px;
    display: flex;
    align-items: center;
    justify-content: center;
}

.tools svg, .range-row svg, .side-tools svg {
    flex: none;
    width: 22px;
    height: 22px;
}

.tools .sep {
    width: 2px;
    height: 29px;
}

.axis-grid {
    display: grid;
    grid-template-columns: 34px 56px 56px 56px;
    column-gap: 10px;
    row-gap: 2px;
    align-items: center;
    padding: 3px 0 0 7px;
}

.axis-grid > span, .axis-grid .axis {
    height: 21px;
}

.axis {
    display: flex;
    align-items: center;
    justify-content: center;
    gap: 4px;
}

.axis svg, .steps svg {
    width: 14px;
    height: 12px;
}

.steps {
    display: flex;
    gap: 10px;
    padding-left: 5px;
}

input[type=text] {
    width: 100%;
    min-width: 0;
    height: 21px;
    padding: 0 1px;
    background: #fff;
    border: 1px solid #e2e3ea;
    border-top-color: #abadb3;
}

.slider {
    appearance: none;
    display: block;
    width: 100%;
    height: 24px;
    background: linear-gradient(#a8a8a8, #a8a8a8) 0 11px / 100% 1px no-repeat, linear-gradient(#fff, #fff) 0 12px / 100% 1px no-repeat;
}

.slider::-webkit-slider-thumb {
    appearance: none;
    width: 11px;
    height: 23px;
    border: 1px solid #707070;
    border-radius: 2px;
    background: linear-gradient(#f4f4f4 50%, #d8d8d8 50%, #d0d0d0);
}

.value-slider {
    padding: 3px 1px 2px;
}

.pos-grid {
    display: grid;
    grid-template-columns: 78px repeat(3, 1fr);
    column-gap: 1px;
    align-items: center;
    padding-left: 2px;
}

.pos-grid label {
    font-size: 11px;
}

.color-row {
    display: flex;
    align-items: center;
    gap: 4px;
    padding: 3px 2px 8px 4px;
}

.color-row .slider {
    flex: none;
    width: 161px;
    margin-left: auto;
}

.wheel {
    width: 22px;
    height: 22px;
    border-radius: 50%;
    background: radial-gradient(#fff 15%, transparent 60%), conic-gradient(#a8c83c, #3cb848, #3c9cd8, #5048c0, #c040b8, #d84858, #a8c83c);
}

/* 3d view */
.view3d {
    position: relative;
    margin: 3px 8px 2px 10px;
    background: #8099b3;
    overflow: hidden;
}

.view3d svg {
    position: absolute;
    width: 100%;
    height: 100%;
}

/* right side */
.workspace {
    display: flex;
    flex-direction: column;
}

.subwindow {
    border: 3px solid #99b4d1;
    background: #f0f0f0;
}

.subwindow header {
    display: flex;
    align-items: center;
    gap: 4px;
    height: 26px;
    padding: 0 4px 0 2px;
    background: #b1c7de;
}

.subwindow header button {
    width: 16px;
    height: 16px;
    margin-left: 4px;
}

.mode-row {
    display: flex;
    align-items: center;
    gap: 2px;
    height: 26px;
    padding: 0 2px;
}

.ok {
    width: 21px;
    height: 21px;
    margin-right: 2px;
}

.mode {
    flex: 1;
    height: 24px;
}

.mode select {
    height: 24px;
    padding-right: 18px;
    color: #000;
    text-align: center;
    text-align-last: center;
    background: #fff;
    border-color: #fff;
}

.mode::after {
    top: 11px;
}

output {
    width: 55px;
    height: 24px;
    border: 1px solid #a0a0a0;
}

output.wide {
    width: 80px;
}

.faint {
    width: 16px;
    height: 16px;
    margin: 0 9px 0 2px;
    opacity: .6;
}

.image-row {
    display: flex;
    height: 300px;
    padding: 2px 2px 0;
}

canvas {
    flex: 1;
    min-width: 0;
    height: 298px;
    image-rendering: pixelated;
}

.side-tools {
    display: flex;
    flex-direction: column;
    justify-content: flex-end;
    gap: 8px;
    width: 30px;
    padding-left: 6px;
    padding-bottom: 2px;
}

.range-row {
    display: flex;
    align-items: center;
    height: 32px;
    gap: 1px;
    padding-left: 1px;
}

.range-row label {
    margin: 0 3px 0 1px;
    font-size: 11px;
    white-space: nowrap;
}

.range-row input[type=text] {
    width: 51px;
    text-align: center;
}

.range-row > button {
    width: 29px;
}

.spin {
    display: grid;
    grid-template: 9px 9px / 1fr 15px;
    align-content: center;
    width: 48px;
    height: 20px;
    background: #fff;
    border-top: 1px solid #abadb3;
}

.spin input[type=text] {
    grid-row: 1 / 3;
    width: 100%;
    height: 16px;
    padding: 0;
    border: none;
    font-size: 11px;
}

.spin button {
    display: flex;
    align-items: center;
    justify-content: center;
    border: 1px solid #c4c4c4;
    background: #eee;
}

.spin button::before {
    content: '';
    border: 3px solid transparent;
}

.s-up::before {
    border-top: none !important;
    border-bottom-color: #5a68a8 !important;
}

.s-down::before {
    border-bottom: none !important;
    border-top-color: #5a68a8 !important;
}

.placeholder {
    flex: 1;
    display: flex;
    align-items: center;
    justify-content: center;
    padding: 4px 2px 0 0;
    text-align: center;
    font: bold 16px/19px 'Liberation Sans', sans-serif;
    color: #c6c6c6;
}

/* status bar */
.statusbar {
    display: grid;
    grid-template-columns: 424px 1fr;
    gap: 1px;
    height: 22px;
    background: #f0f0f0;
}

.status-text {
    border: 1px solid #a0a0a0;
    margin-bottom: 2px;
}

.status-progress {
    border: 1px solid #999;
    background: linear-gradient(#fff, #dcdcdc 30%, #c9c9c9 35%, #c9c9c9 80%, #dcdcdc);
}
```
